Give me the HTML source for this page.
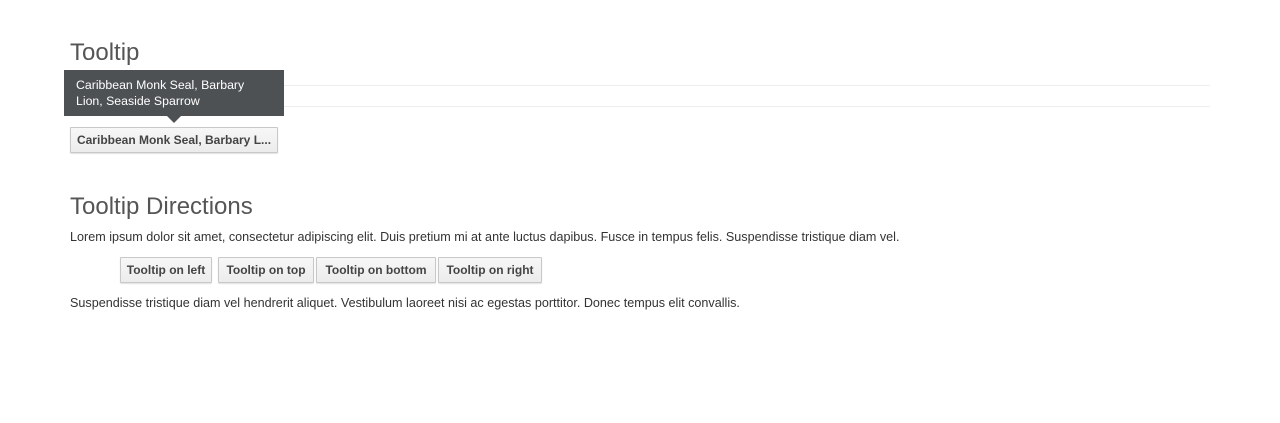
<!DOCTYPE html>
<html><head><meta charset="utf-8"><style>
body{margin:0;background:#fff;font-family:"Liberation Sans",sans-serif;color:#333;width:1280px;height:423px;position:relative;overflow:hidden}
.a{position:absolute}
h2{position:absolute;margin:0;font-weight:normal;font-size:24px;color:#555;letter-spacing:0}
.hr{position:absolute;left:70px;width:1140px;height:1px;background:#eee}
.btn{position:absolute;height:24px;border:1px solid #c8c8c8;background:linear-gradient(#f7f7f7,#ececec);font-size:12px;font-weight:bold;color:#444;line-height:24px;text-align:center;box-shadow:0 1px 1px rgba(0,0,0,.12);box-sizing:content-box;border-radius:1px;white-space:nowrap}
p{position:absolute;margin:0;font-size:12.6px;color:#333;white-space:nowrap}
</style></head><body>
<h2 style="left:70px;top:39px">Tooltip</h2>
<div class="hr" style="top:85px"></div>
<div class="hr" style="top:106px"></div>
<div class="a" style="left:64px;top:70px;width:220px;height:46px;background:#4d5154;color:#fff;font-size:12.3px;line-height:16px;">
<div style="padding:7px 12px">Caribbean Monk Seal, Barbary<br>Lion, Seaside Sparrow</div></div>
<div class="a" style="left:167px;top:116px;width:0;height:0;border-left:7px solid transparent;border-right:7px solid transparent;border-top:7px solid #4d5154"></div>
<div class="btn" style="left:70px;top:127px;width:206px">Caribbean Monk Seal, Barbary L...</div>
<h2 style="left:70px;top:193px">Tooltip Directions</h2>
<p style="left:70px;top:230px">Lorem ipsum dolor sit amet, consectetur adipiscing elit. Duis pretium mi at ante luctus dapibus. Fusce in tempus felis. Suspendisse tristique diam vel.</p>
<div class="btn" style="left:120px;top:257px;width:90px">Tooltip on left</div>
<div class="btn" style="left:218px;top:257px;width:94px">Tooltip on top</div>
<div class="btn" style="left:316px;top:257px;width:118px">Tooltip on bottom</div>
<div class="btn" style="left:438px;top:257px;width:102px">Tooltip on right</div>
<p style="left:70px;top:296px">Suspendisse tristique diam vel hendrerit aliquet. Vestibulum laoreet nisi ac egestas porttitor. Donec tempus elit convallis.</p>
</body></html>
